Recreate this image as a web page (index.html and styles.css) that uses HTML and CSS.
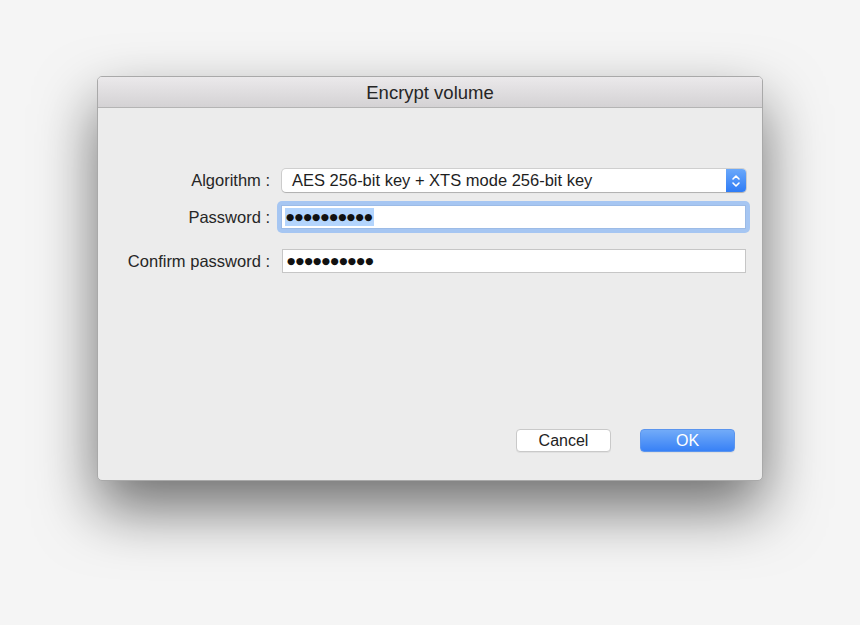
FILE: index.html
```html
<!DOCTYPE html>
<html lang="en">
<head>
    <meta charset="UTF-8">
    <title>Encrypt volume</title>
    <link rel="stylesheet" href="styles.css">
</head>
<body>
<div class="window">
    <div class="titlebar">Encrypt volume</div>
    <div class="content">
        <div class="form">
            <div class="row row-algo">
                <label>Algorithm :</label>
                <div class="select">
                    <span class="select-text">AES 256-bit key + XTS mode 256-bit key</span>
                    <span class="stepper">
                        <svg width="10" height="14" viewBox="0 0 10 14">
                            <path d="M2 5 L5 2 L8 5 M2 9 L5 12 L8 9" fill="none" stroke="#fff" stroke-width="1.6" stroke-linecap="round" stroke-linejoin="round"/>
                        </svg>
                    </span>
                </div>
            </div>
            <div class="row row-pass">
                <label>Password :</label>
                <div class="focus-ring">
                    <div class="field"><span class="dots selected">●●●●●●●●●●</span></div>
                </div>
            </div>
            <div class="row row-confirm">
                <label>Confirm password :</label>
                <div class="field"><span class="dots">●●●●●●●●●●</span></div>
            </div>
        </div>
        <div class="buttons">
            <button class="btn">Cancel</button>
            <button class="btn btn-default">OK</button>
        </div>
    </div>
</div>
</body>
</html>
```

FILE: styles.css
```css
body {
    margin: 0;
    padding: 0;
    height: 625px;
    background: #f5f5f5;
    font-family: "Liberation Sans", Arial, sans-serif;
    color: #222;
    overflow: hidden;
}

.window {
    width: 664px;
    height: 403px;
    margin: 76px auto 0;
    border: 1px solid #a9a9a9;
    border-radius: 5px;
    background: #ececec;
    box-shadow: 0 28px 60px rgba(0, 0, 0, 0.55);
    display: flex;
    flex-direction: column;
    overflow: hidden;
}

.titlebar {
    height: 30px;
    line-height: 32px;
    text-align: center;
    font-size: 18.5px;
    color: #262626;
    background: linear-gradient(#ebe9eb, #d4d2d4);
    border-bottom: 1px solid #b4b4b4;
}

.content {
    flex: 1;
    display: flex;
    flex-direction: column;
    justify-content: space-between;
    padding: 61px 16px 28px 16px;
}

.form {
    display: flex;
    flex-direction: column;
}

.row {
    display: grid;
    grid-template-columns: 156px 1fr;
    column-gap: 12px;
    align-items: center;
}

.row label {
    text-align: right;
    font-size: 16.5px;
    color: #262626;
}

.row-pass {
    margin-top: 9px;
    margin-left: -4px;
    margin-right: -4px;
    grid-template-columns: 160px 1fr;
    column-gap: 7px;
}

.row-confirm {
    margin-top: 16px;
}

.select {
    height: 23px;
    display: flex;
    align-items: center;
    background: #fff;
    border-radius: 4px;
    box-shadow: 0 0 0 1px rgba(0, 0, 0, 0.12), 0 1px 1px rgba(0, 0, 0, 0.15);
    overflow: hidden;
}

.select-text {
    flex: 1;
    padding-left: 10px;
    font-size: 16.5px;
    color: #1e1e1e;
}

.stepper {
    width: 20px;
    height: 23px;
    display: flex;
    align-items: center;
    justify-content: center;
    background: linear-gradient(#6aa8fa, #2f7cf6);
}

.focus-ring {
    padding: 4px;
    border-radius: 5px;
    background: #a6c6f2;
}

.field {
    height: 22px;
    display: flex;
    align-items: center;
    background: #fff;
    border: 1px solid #c6c6c6;
    padding-left: 3px;
}

.focus-ring .field {
    border-color: #9cbbe6;
}

.dots {
    font-family: "DejaVu Sans", sans-serif;
    font-size: 9.5px;
    letter-spacing: 0.4px;
    line-height: 18px;
    color: #111;
    padding: 0 1px 0 1px;
}

.dots.selected {
    background: #b4d5fd;
}

.buttons {
    display: flex;
    justify-content: flex-end;
    gap: 29px;
    padding-right: 11px;
}

.btn {
    width: 95px;
    height: 23px;
    font-family: "Liberation Sans", Arial, sans-serif;
    font-size: 16px;
    color: #222;
    background: #fff;
    border: 1px solid #c9c9c9;
    border-radius: 4px;
    box-shadow: 0 1px 0 rgba(0, 0, 0, 0.05);
    padding: 0;
}

.btn-default {
    color: #fff;
    background: linear-gradient(#72abf8, #3881f6);
    border-color: #5b95ee;
}
```
